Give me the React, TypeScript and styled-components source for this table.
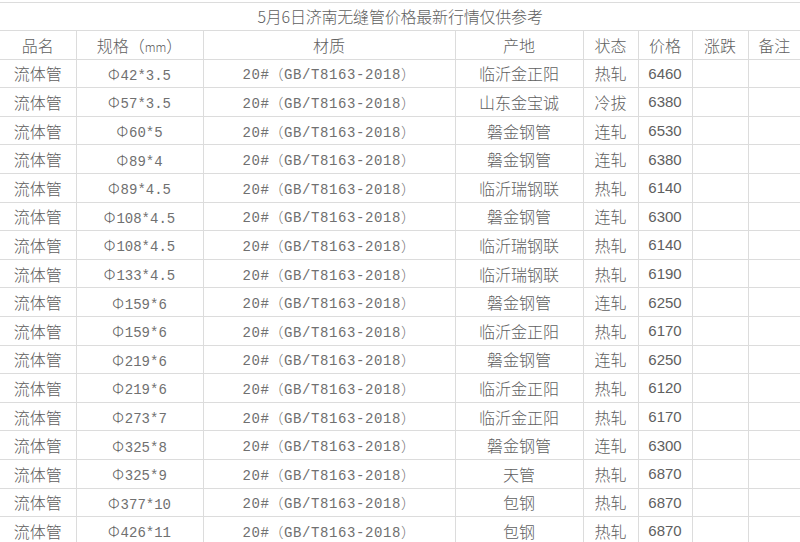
import styled, { createGlobalStyle } from 'styled-components';

const GlobalStyle = createGlobalStyle`
  html, body {
    margin: 0;
    padding: 0;
    background: #ffffff;
  }
  body {
    font-family: "Noto Sans CJK SC", "Liberation Sans", sans-serif;
    color: #606060;
  }
`;

const Page = styled.div`
  padding-top: 2px;
  width: 800px;
  overflow: hidden;
`;

const Table = styled.table`
  width: 800px;
  border-collapse: collapse;
  table-layout: fixed;
  font-size: 16px;
  color: #606060;
`;

const Col = styled.col<{ $w: number }>`
  width: ${(p) => p.$w}px;
`;

const TitleCell = styled.td`
  height: 27px;
  padding: 0;
  text-align: center;
  font-size: 16px;
  line-height: 27px;
  border-top: 1px solid #dcdcdc;
  border-bottom: 1px solid #dcdcdc;
  font-weight: 300;
  letter-spacing: -0.2px;
`;

const Cell = styled.td<{ $mono?: boolean; $num?: boolean; $spread?: number }>`
  height: 27.6px;
  padding: 0;
  text-align: center;
  white-space: nowrap;
  overflow: hidden;
  border: 1px solid #dcdcdc;
  border-top: none;
  font-weight: 300;
  font-family: ${(p) =>
    p.$mono
      ? '"Liberation Mono", "Noto Sans CJK SC", monospace'
      : p.$num
      ? '"Liberation Sans", sans-serif'
      : '"Noto Sans CJK SC", sans-serif'};
  font-size: ${(p) => (p.$mono ? '14px' : p.$num ? '15px' : '16px')};
  letter-spacing: ${(p) => p.$spread ?? 0}px;
  color: ${(p) => (p.$mono ? '#707070' : '#606060')};
  &:first-child {
    border-left: none;
  }
  &:last-child {
    border-right: none;
  }
`;

const HeadCell = styled(Cell).attrs({ as: 'th' })`
  font-weight: 300;
`;

const Unit = styled.span`
  font-size: 12px;
`;

const Phi = styled.span`
  font-family: "Noto Sans CJK SC", sans-serif;
  font-size: 15px;
  margin-right: 1px;
  color: #606060;
`;

const MATERIAL = '20#（GB/T8163-2018）';

const rows: [string, string, string, string][] = [
  ['42*3.5', '临沂金正阳', '热轧', '6460'],
  ['57*3.5', '山东金宝诚', '冷拔', '6380'],
  ['60*5', '磐金钢管', '连轧', '6530'],
  ['89*4', '磐金钢管', '连轧', '6380'],
  ['89*4.5', '临沂瑞钢联', '热轧', '6140'],
  ['108*4.5', '磐金钢管', '连轧', '6300'],
  ['108*4.5', '临沂瑞钢联', '热轧', '6140'],
  ['133*4.5', '临沂瑞钢联', '热轧', '6190'],
  ['159*6', '磐金钢管', '连轧', '6250'],
  ['159*6', '临沂金正阳', '热轧', '6170'],
  ['219*6', '磐金钢管', '连轧', '6250'],
  ['219*6', '临沂金正阳', '热轧', '6120'],
  ['273*7', '临沂金正阳', '热轧', '6170'],
  ['325*8', '磐金钢管', '连轧', '6300'],
  ['325*9', '天管', '热轧', '6870'],
  ['377*10', '包钢', '热轧', '6870'],
  ['426*11', '包钢', '热轧', '6870'],
];

const widths = [76, 127, 252, 128, 55, 54, 56, 52];

export default function App() {
  return (
    <Page>
      <GlobalStyle />
      <Table>
        <colgroup>
          {widths.map((w, i) => (
            <Col key={i} $w={w} />
          ))}
        </colgroup>
        <tbody>
          <tr>
            <TitleCell colSpan={8}>5月6日济南无缝管价格最新行情仅供参考</TitleCell>
          </tr>
          <tr>
            <HeadCell>品名</HeadCell>
            <HeadCell>
              规格（<Unit>mm</Unit>）
            </HeadCell>
            <HeadCell>材质</HeadCell>
            <HeadCell>产地</HeadCell>
            <HeadCell>状态</HeadCell>
            <HeadCell>价格</HeadCell>
            <HeadCell>涨跌</HeadCell>
            <HeadCell>备注</HeadCell>
          </tr>
          {rows.map(([spec, origin, state, price], i) => (
            <tr key={i}>
              <Cell>流体管</Cell>
              <Cell $mono>
                <Phi>Φ</Phi>
                {spec}
              </Cell>
              <Cell $mono $spread={0.6}>
                {MATERIAL}
              </Cell>
              <Cell>{origin}</Cell>
              <Cell>{state}</Cell>
              <Cell $num>{price}</Cell>
              <Cell />
              <Cell />
            </tr>
          ))}
        </tbody>
      </Table>
    </Page>
  );
}
